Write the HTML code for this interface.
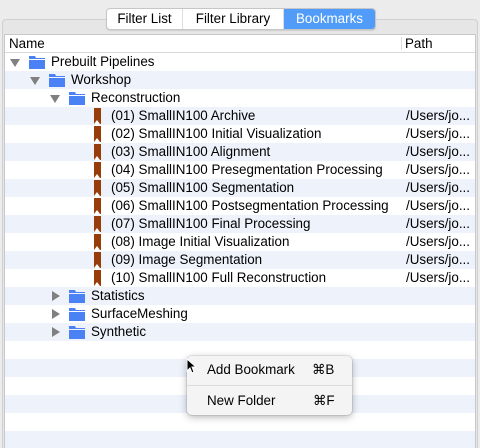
<!DOCTYPE html><html style="overflow:hidden;width:480px;height:448px"><head><style>
body{margin:0;width:480px;height:448px;background:#ececec;font-family:"Liberation Sans",sans-serif;font-size:13.4px;color:#000;position:relative;overflow:hidden}
.panel{position:absolute;left:2px;top:19px;width:476px;height:429px;border:1px solid #d0d0d0;border-bottom:none;border-radius:4px 4px 0 0;background:#e6e6e6;box-sizing:border-box}
.seg{position:absolute;left:106px;top:8px;width:268px;height:20px;border:1px solid #c6c6c6;border-radius:4px;background:#fff;display:flex;overflow:hidden;box-shadow:0 1px 1px rgba(0,0,0,.1)}
.seg div{height:20px;line-height:20px;text-align:center}
.tbl{position:absolute;left:4px;top:34px;width:472px;height:414px;background:#fff;border-left:1px solid #c8c8c8;border-right:1px solid #c8c8c8;border-top:1px solid #c8c8c8;box-sizing:border-box;overflow:hidden}
.hdr{height:17px;border-bottom:1px solid #d8d8d8;position:relative;line-height:17px}
.row{height:18px;line-height:18px;position:relative;white-space:nowrap}
.row:nth-child(even){background:#edf2fb}
.tri{position:absolute;top:6px;width:0;height:0}
.down{border-left:5px solid transparent;border-right:5px solid transparent;border-top:8px solid #808080}
.right{top:4px;border-top:5px solid transparent;border-bottom:5px solid transparent;border-left:8px solid #808080}
.fold{position:absolute;top:3px;width:16px;height:13px}
.bm{position:absolute;top:1px;width:7px;height:16px;background:#993c0c}
.bm:after{content:"";position:absolute;left:0;bottom:0;border-left:3.5px solid transparent;border-right:3.5px solid transparent;border-bottom:4px solid #fff}
.t{position:absolute}
.p{position:absolute;left:401px}
.menu{position:absolute;left:187px;top:356px;width:165px;height:59px;background:#f4f4f4;border-radius:5px;box-shadow:0 2px 8px rgba(0,0,0,.3),0 0 0 1px rgba(0,0,0,.08)}
</style></head><body>
<div class="panel"></div>
<div class="seg"><div style="width:75px;border-right:1px solid #ddd">Filter List</div><div style="width:100px;border-right:1px solid #ddd">Filter Library</div><div style="flex:1;background:#519cf9;color:#fff">Bookmarks</div></div>
<div class="tbl">
<div class="hdr"><span style="position:absolute;left:4px">Name</span><span style="position:absolute;left:396px;top:2px;height:13px;border-left:1px solid #ddd"></span><span style="position:absolute;left:400px">Path</span></div>
<div id="rows">
<div class="row"><div class="tri down" style="left:5px"></div><svg class="fold" style="left:24px" viewBox="0 0 16 13"><path d="M0 0h6l1 2h9v1H0z M0 4h16v9H0z" fill="#4a82f6"/></svg><span class="t" style="left:46px">Prebuilt Pipelines</span></div>
<div class="row"><div class="tri down" style="left:25px"></div><svg class="fold" style="left:44px" viewBox="0 0 16 13"><path d="M0 0h6l1 2h9v1H0z M0 4h16v9H0z" fill="#4a82f6"/></svg><span class="t" style="left:66px">Workshop</span></div>
<div class="row"><div class="tri down" style="left:45px"></div><svg class="fold" style="left:64px" viewBox="0 0 16 13"><path d="M0 0h6l1 2h9v1H0z M0 4h16v9H0z" fill="#4a82f6"/></svg><span class="t" style="left:86px">Reconstruction</span></div>
<div class="row"><div class="bm" style="left:89px"></div><span class="t" style="left:106px">(01) SmallIN100 Archive</span><span class="p">/Users/jo...</span></div>
<div class="row"><div class="bm" style="left:89px"></div><span class="t" style="left:106px">(02) SmallIN100 Initial Visualization</span><span class="p">/Users/jo...</span></div>
<div class="row"><div class="bm" style="left:89px"></div><span class="t" style="left:106px">(03) SmallIN100 Alignment</span><span class="p">/Users/jo...</span></div>
<div class="row"><div class="bm" style="left:89px"></div><span class="t" style="left:106px">(04) SmallIN100 Presegmentation Processing</span><span class="p">/Users/jo...</span></div>
<div class="row"><div class="bm" style="left:89px"></div><span class="t" style="left:106px">(05) SmallIN100 Segmentation</span><span class="p">/Users/jo...</span></div>
<div class="row"><div class="bm" style="left:89px"></div><span class="t" style="left:106px">(06) SmallIN100 Postsegmentation Processing</span><span class="p">/Users/jo...</span></div>
<div class="row"><div class="bm" style="left:89px"></div><span class="t" style="left:106px">(07) SmallIN100 Final Processing</span><span class="p">/Users/jo...</span></div>
<div class="row"><div class="bm" style="left:89px"></div><span class="t" style="left:106px">(08) Image Initial Visualization</span><span class="p">/Users/jo...</span></div>
<div class="row"><div class="bm" style="left:89px"></div><span class="t" style="left:106px">(09) Image Segmentation</span><span class="p">/Users/jo...</span></div>
<div class="row"><div class="bm" style="left:89px"></div><span class="t" style="left:106px">(10) SmallIN100 Full Reconstruction</span><span class="p">/Users/jo...</span></div>
<div class="row"><div class="tri right" style="left:47px"></div><svg class="fold" style="left:64px" viewBox="0 0 16 13"><path d="M0 0h6l1 2h9v1H0z M0 4h16v9H0z" fill="#4a82f6"/></svg><span class="t" style="left:86px">Statistics</span></div>
<div class="row"><div class="tri right" style="left:47px"></div><svg class="fold" style="left:64px" viewBox="0 0 16 13"><path d="M0 0h6l1 2h9v1H0z M0 4h16v9H0z" fill="#4a82f6"/></svg><span class="t" style="left:86px">SurfaceMeshing</span></div>
<div class="row"><div class="tri right" style="left:47px"></div><svg class="fold" style="left:64px" viewBox="0 0 16 13"><path d="M0 0h6l1 2h9v1H0z M0 4h16v9H0z" fill="#4a82f6"/></svg><span class="t" style="left:86px">Synthetic</span></div>
<div class="row"></div><div class="row"></div><div class="row"></div><div class="row"></div><div class="row"></div><div class="row"></div>
</div></div>
<div class="menu">
<span style="position:absolute;left:20px;top:6px">Add Bookmark</span><span style="position:absolute;left:125px;top:6px">⌘B</span>
<div style="position:absolute;left:0;right:0;top:29px;border-top:1px solid #dcdcdc"></div>
<span style="position:absolute;left:20px;top:37px">New Folder</span><span style="position:absolute;left:126px;top:37px">⌘F</span>
</div>
<svg style="position:absolute;left:186px;top:358px" width="10" height="16" viewBox="0 0 10 16"><path d="M1 1v12l3-3 2 5 2-1-2-5h4z" fill="#000" stroke="#fff" stroke-width="1"/></svg>
</body></html>
